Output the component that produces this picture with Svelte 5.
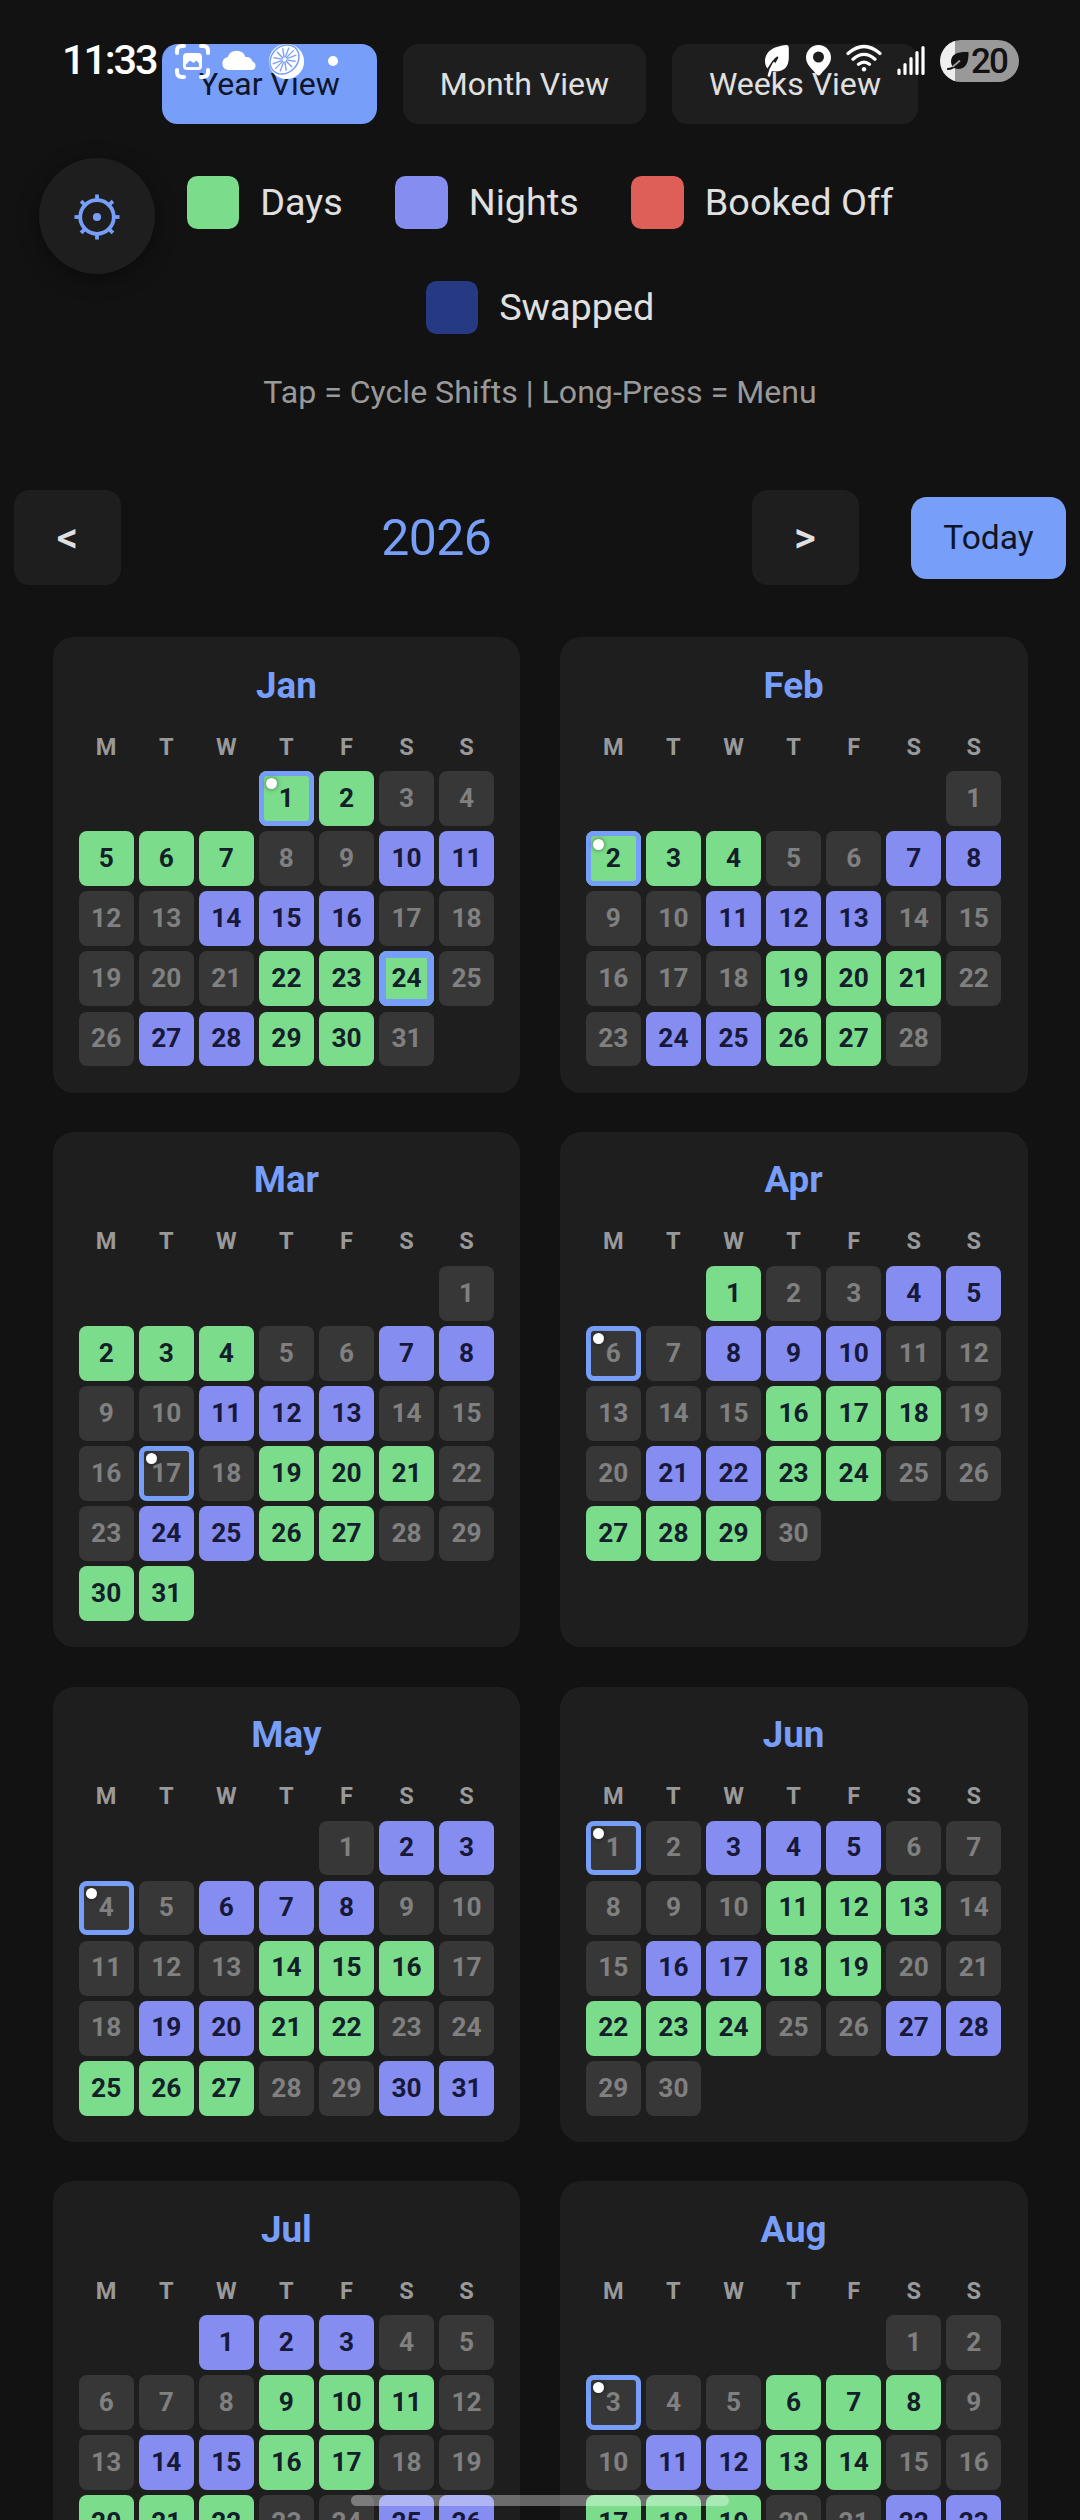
<script>
  const weekdays = ['M', 'T', 'W', 'T', 'F', 'S', 'S'];
  const views = ['Year View', 'Month View', 'Weeks View'];
  const legend = [
    [
      { label: 'Days', kind: 'days' },
      { label: 'Nights', kind: 'nights' },
      { label: 'Booked Off', kind: 'booked' }
    ],
    [{ label: 'Swapped', kind: 'swapped' }]
  ];

  // start: number of empty cells before day 1 (weeks begin on Monday)
  const months = [
    { name: 'Jan', start: 3, length: 31, days: [1, 2, 5, 6, 7, 22, 23, 24, 29, 30], nights: [10, 11, 14, 15, 16, 27, 28], holidays: [1], today: 24 },
    { name: 'Feb', start: 6, length: 28, days: [2, 3, 4, 19, 20, 21, 26, 27], nights: [7, 8, 11, 12, 13, 24, 25], holidays: [2] },
    { name: 'Mar', start: 6, length: 31, days: [2, 3, 4, 19, 20, 21, 26, 27, 30, 31], nights: [7, 8, 11, 12, 13, 24, 25], holidays: [17] },
    { name: 'Apr', start: 2, length: 30, days: [1, 16, 17, 18, 23, 24, 27, 28, 29], nights: [4, 5, 8, 9, 10, 21, 22], holidays: [6] },
    { name: 'May', start: 4, length: 31, days: [14, 15, 16, 21, 22, 25, 26, 27], nights: [2, 3, 6, 7, 8, 19, 20, 30, 31], holidays: [4] },
    { name: 'Jun', start: 0, length: 30, days: [11, 12, 13, 18, 19, 22, 23, 24], nights: [3, 4, 5, 16, 17, 27, 28], holidays: [1] },
    { name: 'Jul', start: 2, length: 31, days: [9, 10, 11, 16, 17, 20, 21, 22], nights: [1, 2, 3, 14, 15, 25, 26, 29, 30, 31], holidays: [] },
    { name: 'Aug', start: 5, length: 31, days: [6, 7, 8, 13, 14, 17, 18, 19], nights: [11, 12, 22, 23, 26, 27, 28], holidays: [3] }
  ];

  const range = (n) => Array.from({ length: n }, (_, i) => i + 1);
  const kindOf = (m, d) => (m.days.includes(d) ? 'days' : m.nights.includes(d) ? 'nights' : 'off');
  const spokes = [0, 45, 90, 135, 180, 225, 270, 315];
  const segments = range(12).map((i) => i * 30);
</script>

<div class="screen">
  <nav class="tabs">
    {#each views as view, i}
      <button class="tab" class:active={i === 0}>{view}</button>
    {/each}
  </nav>

  <section class="legend">
    {#each legend as row}
      <div class="legend-row">
        {#each row as item}
          <div class="legend-item"><span class="swatch {item.kind}"></span>{item.label}</div>
        {/each}
      </div>
    {/each}
  </section>

  <p class="hint">Tap = Cycle Shifts | Long-Press = Menu</p>

  <div class="year-nav">
    <button class="arrow">&lt;</button>
    <div class="year">2026</div>
    <button class="arrow">&gt;</button>
    <button class="today-btn">Today</button>
  </div>

  <main class="months">
    {#each months as m}
      <section class="month">
        <h2>{m.name}</h2>
        <div class="week">
          {#each weekdays as w}<span>{w}</span>{/each}
        </div>
        <div class="grid">
          {#each range(m.start) as _}<span class="cell blank"></span>{/each}
          {#each range(m.length) as d}
            <span class="cell {kindOf(m, d)}" class:holiday={m.holidays.includes(d)} class:today={m.today === d}>
              {d}
              {#if m.holidays.includes(d)}<i class="dot"></i>{/if}
            </span>
          {/each}
        </div>
      </section>
    {/each}
  </main>

  <button class="settings" aria-label="Settings">
    <svg viewBox="-24 -24 48 48" width="48" height="48" fill="none" stroke="#779ef8">
      <circle r="16.8" stroke-width="3.8" />
      <circle r="4.1" fill="#779ef8" stroke="none" />
      {#each spokes as a}
        <path d="M0-17V-22.5" stroke-width="3.8" transform="rotate({a})" />
      {/each}
    </svg>
  </button>

  <header class="status">
    <div class="clock">11:33</div>
    <svg class="left-icons" viewBox="170 40 170 44" width="170" height="44" fill="#fff">
      <g fill="none" stroke="#fff" stroke-width="4" stroke-linecap="round">
        <path d="M177 53V51Q177 46 182 46H184M201 46H203Q208 46 208 51V53M208 70V72Q208 77 203 77H201M184 77H182Q177 77 177 72V70" />
      </g>
      <path fill-rule="evenodd" d="M187 53H198Q202 53 202 57V66Q202 70 198 70H187Q183 70 183 66V57Q183 53 187 53ZM186 67H199V63.500L196.500 60.500L193.500 63L190 60.500L186 64.500Z" />
      <path d="M228 70a6.500 6.500 0 0 1-.5-12.800A9.500 9.500 0 0 1 245.500 57a6.500 6.500 0 0 1 7 4.500A4.400 4.400 0 0 1 252 70Z" />
      <circle cx="286.500" cy="61.500" r="17.600" />
      <g stroke="#779ef8" fill="none" transform="translate(284.500 59.500) rotate(-45)">
        <ellipse rx="15.800" ry="13" stroke-width="1.500" />
        {#each segments as a}
          <path d="M0-2V-11.500" stroke-width="1.300" transform="scale(1.150 .92) rotate({a})" />
        {/each}
      </g>
      <circle cx="333" cy="61" r="5" />
    </svg>
    <svg class="right-icons" viewBox="760 38 170 46" width="170" height="46" fill="#fff">
      <path d="M786 45Q788.800 44.600 788.800 47.500V58Q788.500 71.500 775 71.500Q772.500 71.500 771 70.500L778 58.500Q779 56 777 56.500Q773 59 767.500 68.500Q765 66 765 61C765.500 50 776 46 786 45Z" />
      <path d="M769 75.500Q770.500 69 774 63.500" fill="none" stroke="#fff" stroke-width="2.800" stroke-linecap="round" />
      <path fill-rule="evenodd" d="M818.500 45a12.500 12.500 0 0 1 12.500 12.500C831 65 824.500 69 820.500 74.500Q818.500 76.500 816.500 74.500C812.500 69 806 65 806 57.500A12.500 12.500 0 0 1 818.500 45ZM818.500 51.500a5.500 5.500 0 1 0 0 11a5.500 5.500 0 0 0 0-11Z" />
      <g fill="none" stroke="#fff" stroke-width="3.200" stroke-linecap="round">
        <path d="M848 53.500Q864 39.500 880 53.500M853 59.200Q864 49.500 875 59.200M858.500 64.300Q864 60 869.500 64.300" />
        <path d="M899 70V73.500M905 64.500V73.500M911 58.500V73.500M917 52.500V73.500M923 47.500V73.500" />
      </g>
      <circle cx="864" cy="69.200" r="2.200" />
    </svg>
    <div class="battery">
      <svg viewBox="0 0 24 22" width="24" height="22">
        <path d="M22.500 2C13 1.500 5 3.500 5 11.500C5 14 6 16 8 18C19 22 23 13 22.500 2Z" fill="#121212" />
        <path d="M2 19Q8 19 13.500 11" fill="none" stroke="#121212" stroke-width="2.200" stroke-linecap="round" />
        <path d="M7 16.500L13.500 11" stroke="#999" stroke-width="1.800" stroke-linecap="round" />
      </svg>
      <span>20</span>
    </div>
  </header>
  <div class="home-bar"></div>
</div>

<style>
  :global(body) {
    margin: 0;
    background: #121212;
  }
  .screen {
    position: relative;
    box-sizing: border-box;
    width: 1080px;
    height: 2520px;
    overflow: hidden;
    padding-top: 44px;
    background: #121212;
    color: #e0e0e0;
    font-family: Roboto, sans-serif;
  }
  button {
    display: block;
    margin: 0;
    padding: 0;
    border: 0;
    background: #1e1e1e;
    color: #e0e0e0;
    font-family: inherit;
  }
  .tabs {
    display: flex;
    justify-content: center;
    gap: 26.25px;
    height: 80px;
  }
  .tab {
    padding: 0 36.75px;
    border-radius: 15.75px;
    font-size: 32.1px;
  }
  .tab.active,
  .today-btn {
    background: #779ef8;
    color: #0e1528;
  }
  .legend {
    display: flex;
    flex-direction: column;
    gap: 52.5px;
    padding-top: 52px;
  }
  .legend-row {
    display: flex;
    justify-content: center;
    gap: 52.5px;
    height: 52.5px;
  }
  .legend-item {
    display: flex;
    align-items: center;
    gap: 21px;
    font-size: 37.8px;
  }
  .swatch {
    width: 52.5px;
    height: 52.5px;
    border-radius: 10.5px;
  }
  .days {
    background: #7bdd8b;
    color: #13202a;
  }
  .nights {
    background: #858df0;
    color: #17183a;
  }
  .booked {
    background: #dd5f57;
  }
  .swapped {
    background: #263983;
  }
  .hint {
    margin: 40.5px 0 0;
    text-align: center;
    font-size: 32.1px;
    line-height: 37px;
    color: #999;
  }
  .year-nav {
    display: flex;
    align-items: center;
    height: 95px;
    margin: 79px 14px 0;
  }
  .arrow {
    width: 107px;
    height: 95px;
    border-radius: 15.75px;
    font-size: 42px;
    font-weight: 500;
  }
  .year {
    flex: 1;
    text-align: center;
    font-size: 50px;
    letter-spacing: -0.6px;
    color: #779ef8;
  }
  .today-btn {
    width: 155px;
    height: 82px;
    margin-left: 52.5px;
    border-radius: 15.75px;
    font-size: 33.6px;
  }
  .months {
    display: grid;
    grid-template-columns: 1fr 1fr;
    gap: 39.375px;
    padding: 52.4px 52.5px 0;
  }
  .month {
    padding: 26.25px;
    border-radius: 21px;
    background: #1e1e1e;
  }
  h2 {
    margin: 0;
    height: 43px;
    line-height: 43px;
    text-align: center;
    font-size: 36.75px;
    font-weight: 700;
    color: #779ef8;
  }
  .week,
  .grid {
    display: grid;
    grid-template-columns: repeat(7, 1fr);
    gap: 5.25px;
  }
  .week {
    margin: 26px 0 10.6px;
    height: 28px;
    line-height: 28px;
    text-align: center;
    font-size: 23.6px;
    font-weight: 700;
    color: #999;
  }
  .cell {
    position: relative;
    box-sizing: border-box;
    display: flex;
    align-items: center;
    justify-content: center;
    aspect-ratio: 1;
    padding-bottom: 1.5px;
    border-radius: 7.9px;
    font-size: 26.25px;
    font-weight: 700;
  }
  .off {
    background: #373737;
    color: #808080;
  }
  .holiday {
    box-shadow: inset 0 0 0 5px #779ef8;
  }
  .today {
    box-shadow: inset 0 0 0 7px #779ef8;
  }
  .dot {
    position: absolute;
    left: 7.5px;
    top: 7.2px;
    width: 11px;
    height: 11px;
    border-radius: 50%;
    background: #fff;
    box-shadow: 0 0 5px rgba(0, 0, 0, 0.5);
  }
  .settings {
    position: absolute;
    left: 39px;
    top: 157.5px;
    display: flex;
    align-items: center;
    justify-content: center;
    width: 116px;
    height: 116px;
    padding-top: 3px;
    border-radius: 50%;
    box-shadow: 0 5px 21px rgba(0, 0, 0, 0.4);
  }
  .status {
    position: absolute;
    left: 0;
    top: 38px;
    display: flex;
    width: 1080px;
    height: 46px;
  }
  .clock {
    width: 108px;
    margin-left: 62px;
    line-height: 44px;
    font-size: 41.5px;
    font-weight: 500;
    letter-spacing: -2.2px;
    color: #fff;
  }
  .left-icons {
    margin-top: 2px;
  }
  .right-icons {
    margin-left: 420px;
  }
  .battery {
    display: flex;
    align-items: center;
    box-sizing: border-box;
    width: 79px;
    height: 42px;
    margin: 2px 0 0 10px;
    padding-left: 6px;
    border-radius: 21px;
    background: linear-gradient(90deg, #eee 15px, #999 15px);
    color: #121212;
    font-size: 35px;
    font-weight: 500;
    letter-spacing: -1.8px;
  }
  .battery span {
    margin-left: 1px;
  }
  .home-bar {
    position: absolute;
    left: 351px;
    top: 2495px;
    width: 378px;
    height: 11px;
    border-radius: 6px;
    background: rgba(255, 255, 255, 0.35);
  }
</style>
